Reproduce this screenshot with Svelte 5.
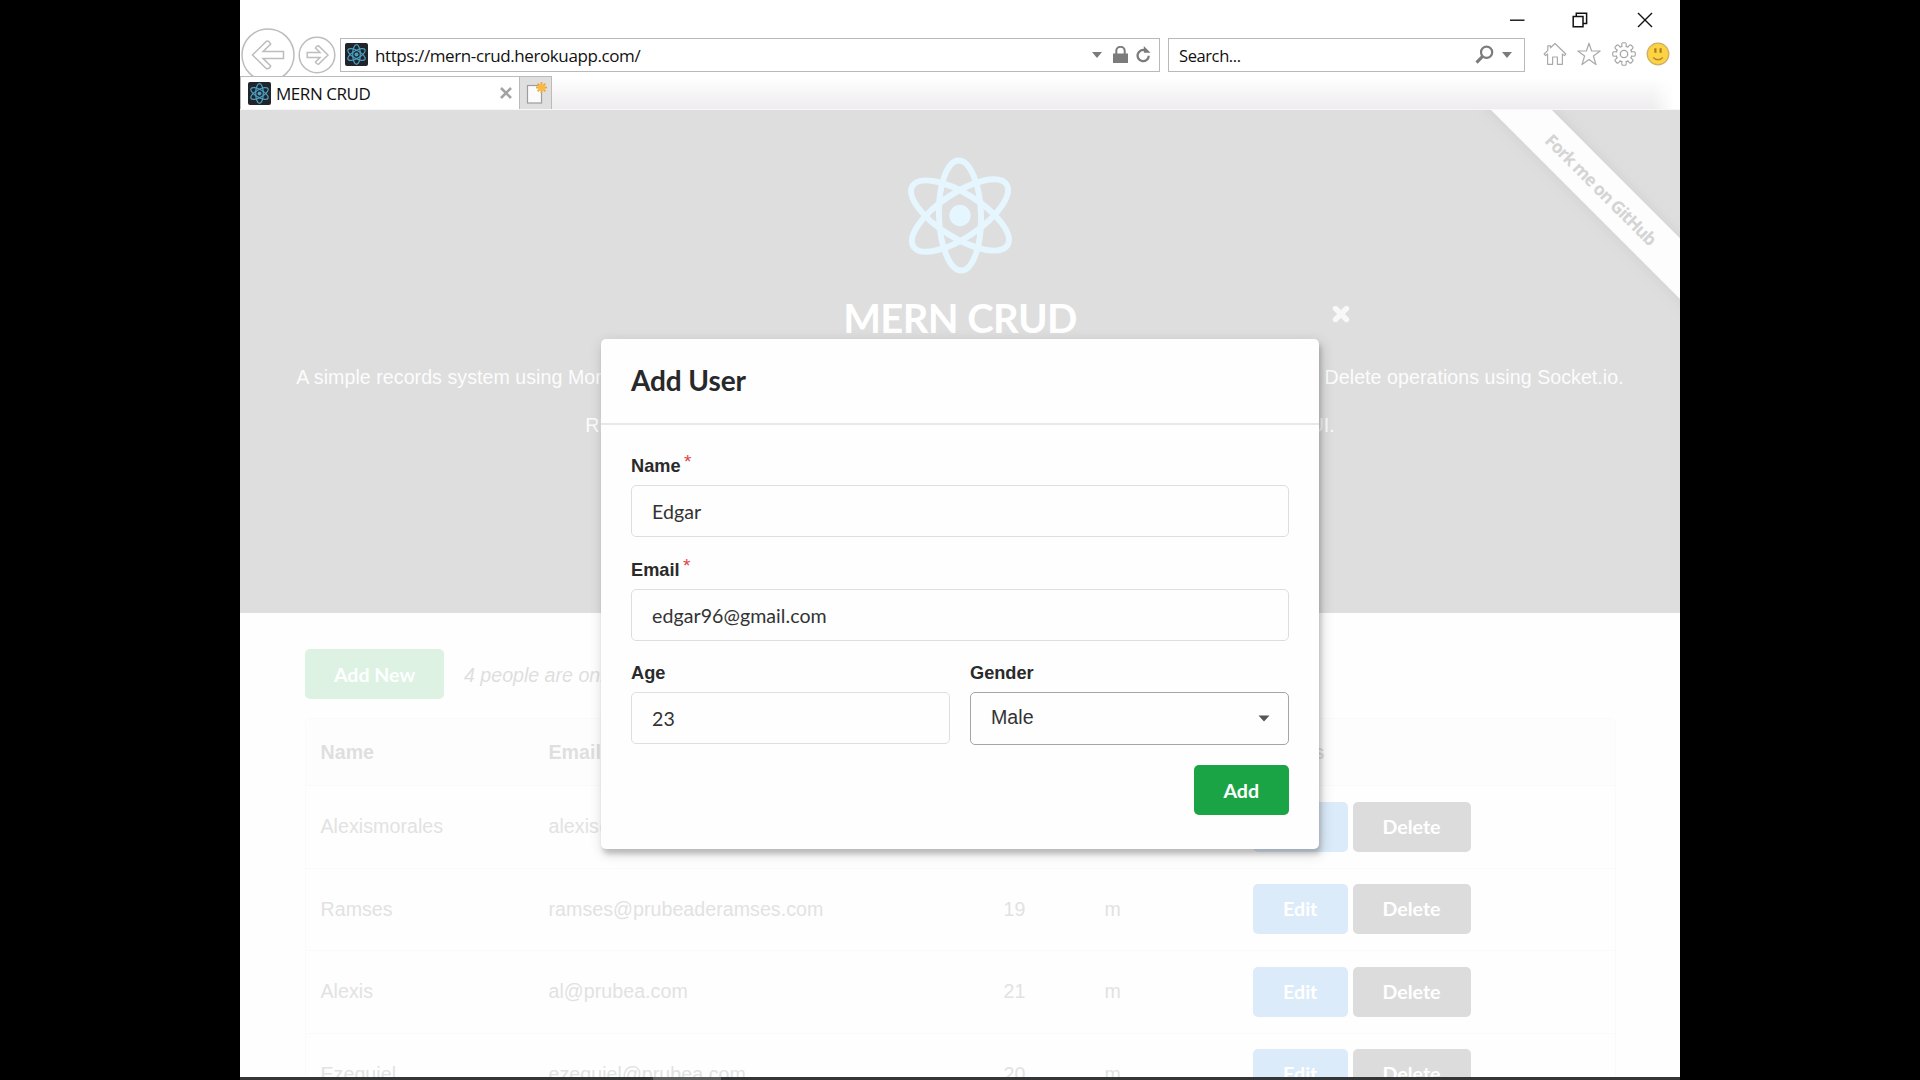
<script>
  const people = [
    { name: 'Alexismorales', email: 'alexis@prubea.com', age: 23, gender: 'm' },
    { name: 'Ramses', email: 'ramses@prubeaderamses.com', age: 19, gender: 'm' },
    { name: 'Alexis', email: 'al@prubea.com', age: 21, gender: 'm' },
    { name: 'Ezequiel', email: 'ezequiel@prubea.com', age: 20, gender: 'm' }
  ];
  const teeth = [0, 45, 90, 135, 180, 225, 270, 315];
</script>

{#snippet favicon()}
  <svg class="favicon" viewBox="0 0 23 23">
    <rect width="23" height="23" rx="2" fill="#20242b" />
    <g fill="none" stroke="#4a9fc0" stroke-width="1.2">
      <ellipse cx="11.5" cy="11.5" rx="9.8" ry="3.8" transform="rotate(30 11.5 11.5)" />
      <ellipse cx="11.5" cy="11.5" rx="9.8" ry="3.8" transform="rotate(90 11.5 11.5)" />
      <ellipse cx="11.5" cy="11.5" rx="9.8" ry="3.8" transform="rotate(150 11.5 11.5)" />
    </g>
    <circle cx="11.5" cy="11.5" r="2" fill="#4a9fc0" />
  </svg>
{/snippet}

<div class="screen">
  <div class="window">
    <header class="chrome">
      <div class="titlebar">
        <svg class="min" width="16" height="16" viewBox="0 0 16 16"><path d="M1 8.2H15.5" stroke="#111" stroke-width="1.4" /></svg>
        <svg width="16" height="16" viewBox="0 0 16 16" fill="none" stroke="#111" stroke-width="1.5"><path d="M1.2 4.4H11V14.8H1.2ZM4.3 4.2V1.2H14.6V11.6H11.3" /></svg>
        <svg width="16" height="16" viewBox="0 0 16 16"><path d="M1 1L15 15M15 1L1 15" stroke="#111" stroke-width="1.4" /></svg>
      </div>
      <div class="navbar">
        <svg class="back" width="54" height="54" viewBox="0 0 54 54" fill="none" stroke="#bdbdbd" stroke-width="1.5">
          <circle cx="27" cy="27" r="26" fill="#fff" />
          <path d="M11.5 27L25.5 13.2Q28 12.5 29.7 16L22 23.6H42.5V30.4H22L29.7 38Q28.5 41 25.5 40.8Z" />
        </svg>
        <svg class="fwd" width="38" height="38" viewBox="0 0 38 38" fill="none" stroke="#bdbdbd" stroke-width="1.5">
          <circle cx="19" cy="19" r="17.8" fill="#fff" />
          <path d="M30 19L20.5 9.7Q18.5 9.5 17.5 12L22 16.6H9.2V21.4H22L17.5 26Q18.5 28.5 20.5 28.3Z" />
        </svg>
        <div class="address">
          {@render favicon()}
          <span class="url">https://mern-crud.herokuapp.com/</span>
          <svg width="10" height="6" viewBox="0 0 10 6"><path d="M0 0H10L5 6Z" fill="#7b7b7b" /></svg>
          <svg class="lock" width="15" height="17" viewBox="0 0 15 17"><path d="M0 7.5H15V17H0Z" fill="#7b7b7b" /><path d="M3.3 8V4.8A4.2 4 0 0 1 11.7 4.8V8" fill="none" stroke="#7b7b7b" stroke-width="2" /></svg>
          <svg class="reload" width="15" height="17" viewBox="0 0 15 17"><path d="M12.8 9.8A5.6 5.6 0 1 1 9.4 4.4" fill="none" stroke="#7b7b7b" stroke-width="2.3" /><path d="M7.8 0L14.6 6.8H7.8Z" fill="#7b7b7b" /></svg>
        </div>
        <div class="search">
          <span>Search...</span>
          <svg width="19" height="19" viewBox="0 0 19 19" fill="none" stroke="#7b7b7b"><circle cx="11.6" cy="7.2" r="5.6" stroke-width="2.2" /><path d="M7.6 11.4L1.5 17.6" stroke-width="3" /></svg>
          <svg class="drop" width="10" height="6" viewBox="0 0 10 6"><path d="M0 0H10L5 6Z" fill="#7b7b7b" /></svg>
        </div>
        <div class="tools">
          <svg width="24" height="24" viewBox="0 0 24 24" fill="#fff" stroke="#aaa" stroke-width="1.2" stroke-linejoin="round"><path d="M12 1.5L7.5 5.8V3.8H4.8V8.4L1.2 12L2.6 13.6L4.6 12V22.3H9.6V15H14.4V22.3H19.4V12L21.4 13.6L22.8 12Z" /></svg>
          <svg width="24" height="24" viewBox="0 0 24 24" fill="#fff" stroke="#aaa" stroke-width="1.2" stroke-linejoin="round"><path d="M12 1.2L14.6 9H23.2L16.4 14L19 22.6L12 17.4L5 22.6L7.6 14L0.8 9H9.4Z" /></svg>
          <svg width="24" height="24" viewBox="0 0 24 24">
            {#each teeth as a}<rect x="9.9" y="0.8" width="4.2" height="7" rx="1" fill="#fff" stroke="#a6a6a6" stroke-width="1.3" transform="rotate({a} 12 12)" />{/each}
            <circle cx="12" cy="12" r="7.9" fill="none" stroke="#a6a6a6" stroke-width="1.3" />
            {#each teeth as a}<rect x="10.55" y="1.6" width="2.9" height="6" fill="#fff" transform="rotate({a} 12 12)" />{/each}
            <circle cx="12" cy="12" r="7.25" fill="#fff" />
            <circle cx="12" cy="12" r="3.7" fill="#fff" stroke="#a6a6a6" stroke-width="1.3" />
          </svg>
          <svg width="24" height="24" viewBox="0 0 24 24"><circle cx="12" cy="12" r="10.8" fill="#fbd343" stroke="#cfae6a" stroke-width="1.3" /><path d="M9.4 6.3V10.8M14.6 6.3V10.8" stroke="#a87f22" stroke-width="2.2" /><path d="M7.2 15.4Q12 20 16.8 15.4" fill="none" stroke="#b5872a" stroke-width="1.4" /></svg>
        </div>
      </div>
      <div class="tabs">
        <div class="tab">
          {@render favicon()}
          <span>MERN CRUD</span>
          <svg width="12" height="12" viewBox="0 0 12 12"><path d="M1 1L11 11M11 1L1 11" stroke="#a3a3a3" stroke-width="2.6" /></svg>
        </div>
        <div class="newtab">
          <svg width="22" height="24" viewBox="0 0 22 24">
            <rect x="1.5" y="5.5" width="14" height="17.5" fill="#fbfbfb" stroke="#9d9d9d" stroke-width="1.2" />
            <path d="M15.5 2V13M10 7.5H21M11.6 3.6L19.4 11.4M19.4 3.6L11.6 11.4" stroke="#f3a92f" stroke-width="1.8" />
            <circle cx="15.5" cy="7.5" r="3.3" fill="#fbb944" />
          </svg>
        </div>
        <div class="strip"></div>
      </div>
    </header>

    <main class="page">
      <section class="hero">
        <svg class="logo" width="112" height="117" viewBox="-56 -58.5 112 117">
          <g fill="none" stroke="#e5f6fe" stroke-width="6">
            <ellipse rx="55" ry="21" transform="rotate(88.5)" />
            <ellipse rx="56" ry="22" transform="rotate(32)" />
            <ellipse rx="56" ry="22" transform="rotate(-34)" />
          </g>
          <circle r="10.7" fill="#e5f6fe" />
        </svg>
        <h1>MERN CRUD</h1>
        <p>A simple records system using MongoDB, Express.js, React.js, and Node.js with real-time Create, Read, Update, and Delete operations using Socket.io.</p>
        <p>REST API was implemented on the back-end. Semantic UI React was used for the UI.</p>
        <div class="ribbon">Fork me on GitHub</div>
      </section>

      <section class="list">
        <div class="bar">
          <button class="btn create">Add New</button>
          <em>4 people are online.</em>
        </div>
        <div class="table">
          <div class="row head">
            <span>Name</span><span>Email</span><span>Age</span><span>Gender</span><span>Actions</span>
          </div>
          {#each people as p}
            <div class="row">
              <span>{p.name}</span><span>{p.email}</span><span>{p.age}</span><span>{p.gender}</span>
              <div class="actions">
                <button class="btn edit">Edit</button>
                <button class="btn delete">Delete</button>
              </div>
            </div>
          {/each}
        </div>
      </section>
    </main>
    <div class="taskbar"><i></i></div>

    <svg class="dismiss" width="18" height="18" viewBox="0 0 18 18"><path d="M3.5 3.5L14.5 14.5M14.5 3.5L3.5 14.5" stroke="#f8f8f8" stroke-width="5.4" stroke-linecap="round" /></svg>

    <div class="modal">
      <h2>Add User</h2>
      <form>
        <div class="field">
          <label for="name">Name<sup>*</sup></label>
          <div class="input" id="name">Edgar</div>
        </div>
        <div class="field">
          <label for="email">Email<sup>*</sup></label>
          <div class="input" id="email">edgar96@gmail.com</div>
        </div>
        <div class="pair">
          <div class="field">
            <label for="age">Age</label>
            <div class="input age" id="age">23</div>
          </div>
          <div class="field">
            <label for="gender">Gender</label>
            <div class="input select" id="gender">
              <span>Male</span>
              <svg width="12" height="7" viewBox="0 0 12 7"><path d="M0.5 0.5H11.5L6 6.5Z" fill="#555" /></svg>
            </div>
          </div>
        </div>
        <button class="btn add" type="button">Add</button>
      </form>
    </div>
  </div>
</div>

<style>
  :global(body) { margin: 0; background: #000; overflow: hidden; }
  * { box-sizing: border-box; }
  svg { display: block; flex: none; }
  .screen { width: 1920px; height: 1080px; background: #000; display: flex; justify-content: center; }
  .window {
    position: relative; width: 1440px; height: 1080px; overflow: hidden; background: #fefefe;
    display: flex; flex-direction: column; font-family: "Liberation Sans", Arial, sans-serif;
  }

  .chrome { height: 110px; flex: none; background: #fff; font-family: "Open Sans", sans-serif; color: #111; }
  .titlebar { height: 33px; padding: 7px 27px 0 0; display: flex; justify-content: flex-end; align-items: center; gap: 49px; }
  .min { margin-right: -2px; }
  .navbar { height: 43px; display: flex; align-items: center; padding-left: 1px; }
  .back { margin-right: 3px; }
  .fwd { margin-right: 4px; }
  .address, .search { height: 34px; border: 1.5px solid #b9b9b9; background: #fff; display: flex; align-items: center; }
  .address { width: 820px; padding: 0 8px 0 4px; }
  .favicon { width: 23px; height: 23px; }
  .url { flex: 1; margin-left: 7px; font-size: 17px; line-height: 24px; letter-spacing: -0.4px; white-space: nowrap; padding-top: 2px; }
  .lock { margin-left: 11px; }
  .reload { margin-left: 8px; }
  .search { width: 357px; margin-left: 8px; padding: 0 12.5px 0 10px; }
  .search span { flex: 1; font-size: 16.5px; letter-spacing: -0.4px; padding-top: 1px; }
  .drop { margin-left: 8px; }
  .tools { display: flex; gap: 10.5px; margin: -2px 0 0 17.5px; }
  .tabs { position: relative; height: 34px; display: flex; background: #fff; border-bottom: 1.5px solid #f7f7f7; }
  .tab { width: 280px; border-top: 1.5px solid #bbb; border-left: 1px solid #bbb; border-right: 1px solid #bbb; display: flex; align-items: center; padding: 0 7px 0 7px; background: #fff; }
  .tab span { flex: 1; margin-left: 5px; font-size: 17px; line-height: 24px; letter-spacing: -0.45px; white-space: nowrap; padding-top: 1px; }
  .newtab { width: 32px; border: 1px solid #bbb; border-left: 0; border-bottom: 0; background: #dfdfdf; padding: 3px 0 0 6px; }
  .strip { flex: 1; margin-right: 6px; background: linear-gradient(90deg, transparent calc(100% - 22px), #fff), linear-gradient(#fff 5%, #eeecee); }

  .page { flex: 1; min-height: 0; overflow: hidden; }
  .hero { position: relative; height: 503px; background: #dedede; overflow: hidden; padding-top: 47px; display: flex; flex-direction: column; align-items: center; color: #fcfcfc; }
  h1 { margin: 19px 0 0; font: bold 40px/50px Lato, sans-serif; letter-spacing: -0.6px; color: #fff; }
  p { margin: 20px 0 0; font-size: 19.6px; line-height: 28px; letter-spacing: 0.05px; white-space: nowrap; }
  .ribbon {
    position: absolute; left: 1210.5px; top: 57.5px; width: 300px; height: 42.5px; transform: rotate(45deg);
    background: #fdfdfe; box-shadow: 0 0 14px #cfcfd2; color: #d4d4d4; text-align: center;
    font: bold 17.5px/43px "Open Sans", sans-serif; letter-spacing: -0.95px;
  }

  .list { padding: 36px 65px 0; }
  .bar { display: flex; align-items: center; gap: 20px; height: 50px; }
  em { font-size: 19.6px; color: #dedede; line-height: 28px; padding-top: 1px; }
  .btn { border: 0; border-radius: 5px; height: 50px; padding: 0; color: #fff; font: bold 19.6px/50px Lato, sans-serif; }
  .create { width: 139px; background: #ddf2e3; padding-top: 1px; }
  .table { margin-top: 19px; width: 1311px; border: 1.5px solid #fafafa; border-radius: 5px; }
  .row { display: grid; grid-template-columns: 228px 455px 101px 148px 1fr; align-items: center; height: 82.5px; padding-left: 14.5px; border-top: 1px solid #fafafa; font-size: 19.6px; letter-spacing: 0.05px; color: #e2e2e2; }
  .row > span { padding-bottom: 0.5px; }
  .head { height: 66px; border-top: 0; background: #fefdfe; font-weight: bold; color: #dfdfdf; }
  .head > span { padding: 0; }
  .actions { display: flex; gap: 5px; padding-left: 0.5px; }
  .edit { width: 94.5px; background: #dcebf9; }
  .delete { width: 118px; background: #dcdcdc; }
  .taskbar { height: 3px; flex: none; background: #333537; padding-left: 413px; }
  .taskbar i { display: block; width: 68px; height: 3px; background: #5b5d5f; }

  .dismiss { position: absolute; left: 1092px; top: 305px; }
  .modal {
    position: absolute; left: 361px; top: 339px; width: 718px; height: 510px; background: #fefefe; border-radius: 5px;
    box-shadow: 2px 5px 5px 0 rgba(0, 0, 0, 0.18), 2px 4px 14px 1px rgba(0, 0, 0, 0.14);
  }
  h2 { margin: 0; height: 86px; padding: 23px 30px 0; border-bottom: 2px solid #e8e8e8; font: bold 28px/36px Lato, sans-serif; letter-spacing: -0.1px; color: #28292a; }
  form { padding: 28px 30px 0; display: flex; flex-direction: column; gap: 19.5px; }
  .field { flex: 1; min-width: 0; }
  label { display: block; height: 32px; line-height: 26px; font-size: 18.2px; font-weight: bold; color: #2a2a2b; }
  sup { margin-left: 3.5px; font-size: 19px; line-height: 0; vertical-align: 4px; color: #db4545; font-weight: normal; }
  .input { height: 52px; border: 1.5px solid #dededf; border-radius: 5px; padding: 0 20px; font: 19.6px/52px Lato, sans-serif; letter-spacing: 0.05px; color: #333; }
  .age { line-height: 51px; }
  .pair { display: flex; gap: 20px; }
  .select { height: 53px; border-color: #a5a5a8; display: flex; align-items: flex-start; justify-content: space-between; padding-right: 18px; font-family: "Liberation Sans", Arial, sans-serif; line-height: 48px; }
  .select svg { margin-top: 22px; }
  .add { align-self: flex-end; width: 95.5px; background: #1ba446; padding-top: 1px; }
</style>
